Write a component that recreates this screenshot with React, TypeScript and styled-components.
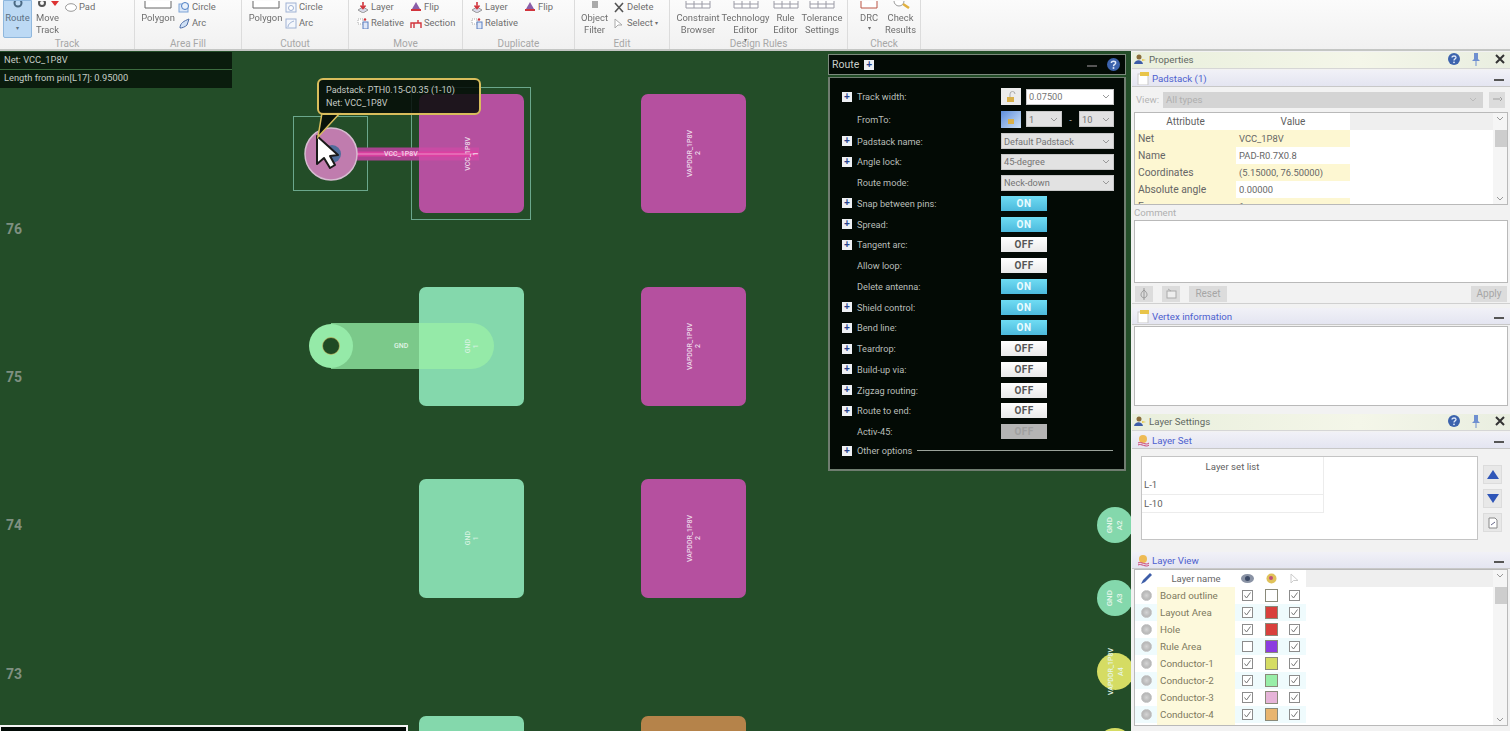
import React from "react";
import styled, { createGlobalStyle } from "styled-components";

const Global = createGlobalStyle`
  html, body { margin: 0; padding: 0; height: 100%; overflow: hidden; background: #f3f3f3; }
  #root { height: 100%; }
`;
const UI = `Roboto, "Open Sans", "Liberation Sans", sans-serif`;

const Page = styled.div`
  width: 1510px; height: 731px; overflow: hidden; display: flex; flex-direction: column;
  font-family: ${UI}; filter: blur(0.35px);
`;
/* ribbon */
const Ribbon = styled.header`
  height: 51px; flex: none; display: flex; box-sizing: border-box; overflow: hidden;
  background: linear-gradient(#fbfbfb, #f1f1f1); border-bottom: 2px solid #c4c6c4;
  color: #6e6e6e; font-size: 9.4px; line-height: 12px;
`;
const Group = styled.section<{ $w: number }>`
  width: ${p => p.$w}px; flex: none; box-sizing: border-box; border-right: 1px solid #dcdcdc;
  display: flex; flex-direction: column;
`;
const GroupBody = styled.div<{ $gap?: number; $pad?: number }>`
  height: 38px; width: 100%; box-sizing: border-box; display: flex; padding-top: 1px;
  gap: ${p => p.$gap ?? 0}px; padding-left: ${p => p.$pad ?? 0}px;
`;
const GroupName = styled.div`
  height: 11px; font-size: 10px; line-height: 11px; color: #a7a7a7; text-align: center;
`;
const Big = styled.div<{ $active?: boolean; $w?: number; $ml?: number }>`
  width: ${p => (p.$w ? p.$w + "px" : "auto")}; margin-left: ${p => p.$ml ?? 0}px; flex: none; height: 37px; box-sizing: border-box;
  display: flex; flex-direction: column; align-items: center; text-align: center; white-space: nowrap;
  position: relative; padding-top: 11px;
  ${p => p.$active && `background: #bcd9f4; border: 1px solid #8fb7dd; border-radius: 0 0 2px 2px; color: #5d7184; margin-top: -1px; height: 38px; padding-top: 11px;`}
`;
const TopIcon = styled.svg`
  position: absolute; top: 0; left: 50%; transform: translateX(-50%);
`;
const Col = styled.div<{ $w?: number; $ml?: number }>`
  width: ${p => (p.$w ? p.$w + "px" : "auto")}; margin-left: ${p => p.$ml ?? 0}px; flex: none; display: flex; flex-direction: column; gap: 4px;
`;
const Small = styled.div`
  height: 12px; display: flex; align-items: center; gap: 2px; white-space: nowrap;
`;
const Caret = styled.span`font-size: 6px; line-height: 8px;`;
/* workspace */
const Main = styled.main`
  flex: 1; display: flex; min-height: 0;
`;
const Canvas = styled.div`
  width: 1131px; flex: none; position: relative; overflow: hidden; background: #234d28;
`;
const InfoBox = styled.div`
  position: absolute; left: 0; top: 1px; width: 232px; height: 36px; background: #0a1c0d; color: #c6cdc6;
  font-size: 9.3px; line-height: 16px;
`;
const InfoRow = styled.div<{ $line?: boolean }>`
  height: 17px; padding-left: 4px; ${p => p.$line && `border-bottom: 1px solid #3c6b3f;`}
`;
const Axis = styled.div<{ $y: number }>`
  position: absolute; left: 6px; top: ${p => p.$y}px; color: #7f9081; font: bold 14px/16px ${UI};
`;
const Pad = styled.div<{ $x: number; $y: number; $c: string; $h?: number }>`
  position: absolute; left: ${p => p.$x}px; top: ${p => p.$y}px; width: 105px; height: ${p => p.$h ?? 119}px;
  border-radius: 7px; background: ${p => p.$c}; display: flex; align-items: center; justify-content: center;
`;
const PadLabel = styled.div`
  position: relative; z-index: 2;
  writing-mode: vertical-rl; transform: rotate(180deg); color: #ecd8e8; font-size: 7px; line-height: 8px; text-align: center; font-weight: 500; white-space: nowrap;
`;
const GreenLabel = styled(PadLabel)`color: #d6f3e0;`;
const ViaLabel = styled(PadLabel)<{ $size?: number }>`color: #e6f6ea; font-size: ${p => p.$size ?? 8}px; line-height: 10px;`;
const Outline = styled.div<{ $x: number; $y: number; $w: number; $h: number }>`
  position: absolute; left: ${p => p.$x}px; top: ${p => p.$y}px; width: ${p => p.$w}px; height: ${p => p.$h}px;
  border: 1px solid #6ba78c; box-sizing: border-box;
`;
const Drawing = styled.svg`
  position: absolute; left: 0; top: 0; width: 1131px; height: 681px; overflow: visible; pointer-events: none;
`;
const Tip = styled.div`
  position: absolute; z-index: 3; left: 317px; top: 27px; width: 164px; height: 37px; box-sizing: border-box;
  background: rgba(5, 12, 8, 0.86); border: 2px solid #d8bd5c; border-radius: 6px; color: #c5cbc5;
  font-size: 9px; line-height: 13px; padding: 4px 0 0 7px; white-space: nowrap;
`;
const Strip = styled.div`
  position: absolute; left: 0; top: 674px; width: 408px; height: 8px; background: #020a06; border: 2px solid #f4f4f4; border-left-width: 1px; box-sizing: border-box;
`;
const Tiny = styled.div<{ $x: number; $y: number; $c: string }>`
  position: absolute; z-index: 2; left: ${p => p.$x}px; top: ${p => p.$y}px; color: ${p => p.$c}; font-size: 7px; line-height: 8px; font-weight: 500; white-space: nowrap;
`;
const Via = styled.div<{ $y: number; $c: string; $s?: number }>`
  position: absolute; left: 1097px; top: ${p => p.$y}px; width: ${p => p.$s ?? 36}px; height: ${p => p.$s ?? 36}px; border-radius: 50%; background: ${p => p.$c};
  display: flex; align-items: center; justify-content: center;
`;
/* route panel */
const RoutePanel = styled.div`
  position: absolute; z-index: 5; left: 828px; top: 3px; width: 298px; height: 417px; display: flex; flex-direction: column; gap: 2px;
  color: #b9beb9; font-size: 9.2px;
`;
const RouteHead = styled.div`
  height: 21px; flex: none; box-sizing: border-box; background: #030a05; border: 1px solid #7c8a7d; display: flex; align-items: center; padding: 0 5px 0 3px; color: #c9cec9; font-size: 10.5px; gap: 5px;
`;
const Spacer = styled.div`flex: 1;`;
const RouteBody = styled.div`
  flex: 1; box-sizing: border-box; background: #030a05; border: 2px solid #6f7d70; border-top-width: 1px; padding: 8px 11px 0 12px;
  display: flex; flex-direction: column;
`;
const Row = styled.div<{ $h?: number }>`
  height: ${p => p.$h ?? 20.75}px; flex: none; display: flex; align-items: center;
`;
const PlusSlot = styled.div`width: 15px; flex: none; display: flex;`;
const Plus = styled.span`
  width: 10px; height: 10px; background: #eef0f4; display: inline-flex; align-items: center; justify-content: center; color: #24408c;
  font: bold 10px/10px "Liberation Sans", sans-serif; flex: none;
`;
const RowLabel = styled.div`width: 144px; flex: none; white-space: nowrap;`;
const Select = styled.div<{ $w: number; $white?: boolean }>`
  width: ${p => p.$w}px; height: 16px; box-sizing: border-box; flex: none; background: ${p => (p.$white ? "#fff" : "#e2e2e2")}; color: #747474;
  border: 1px solid #c8c8c8; display: flex; align-items: center; justify-content: space-between; padding: 0 3px 0 2px; font-size: 9.2px;
`;
const Chevron = styled.svg`width: 8px; height: 5px; flex: none;`;
const Toggle = styled.div<{ $state: "on" | "off" | "dis" }>`
  width: 46px; height: 15px; box-sizing: border-box; font: bold 10px/15px ${UI}; text-align: center; letter-spacing: .4px;
  background: ${p => (p.$state === "on" ? "linear-gradient(#6fdcf3, #4cb9dc)" : p.$state === "off" ? "linear-gradient(#fff, #e9e9e9)" : "#b4b4b4")};
  color: ${p => (p.$state === "on" ? "#e8fbff" : p.$state === "off" ? "#555" : "#a0a0a0")};
`;
const Lock = styled.div<{ $blue?: boolean }>`
  width: 20px; height: 17px; flex: none; margin-right: 5px; background: ${p => (p.$blue ? "linear-gradient(135deg,#5d8edc,#cfe2f7)" : "#ececec")};
  display: flex; align-items: center; justify-content: center;
`;
const Dash = styled.span`width: 17px; text-align: center; flex: none;`;
const Rule = styled.div`flex: 1; height: 1px; background: #9aa29a; margin-left: 5px;`;
/* side */
const Side = styled.aside`
  flex: 1; background: #f2f2f2; display: flex; flex-direction: column; min-width: 0; color: #5f5f5f; font-size: 9.6px; padding: 1px 0 0 1px; box-sizing: border-box;
`;
const DockHead = styled.div`
  height: 17px; flex: none; box-sizing: border-box; display: flex; align-items: center; background: linear-gradient(90deg,#e9efdc,#f4f6e9 60%,#e9eee0); color: #626862; padding: 0 5px 2px 2px; font-size: 9.7px; gap: 3px; border-bottom: 1px solid #d6d6d6;
`;
const SecHead = styled.div`
  height: 17px; flex: none; box-sizing: border-box; display: flex; align-items: center; background: linear-gradient(#f1f1f7,#e4e5f1); color: #4d60cf; padding: 0 4px 0 5px; font-size: 9.7px; gap: 2px; border-bottom: 1px solid #c8c8c8; margin-top: 1px;
`;
const Minus = styled.span`width: 10px; height: 2px; background: #555; margin: 4px 2px 0 0;`;
const PanelMinus = styled(Minus)`margin: 2px 5px 0 0;`;
const ViewBar = styled.div`
  height: 25px; flex: none; display: flex; align-items: center; gap: 4px; padding: 0 5px 0 4px; color: #b5b5b5;
`;
const ViewSelect = styled.div`
  flex: 1; height: 16px; background: #d4d4d4; color: #afafaf; padding-left: 3px; line-height: 16px; display: flex; justify-content: space-between; align-items: center; padding-right: 6px; margin-right: 2px;
`;
const GreyBtn = styled.div<{ $w: number }>`
  width: ${p => p.$w}px; height: 16px; flex: none; background: #dcdcdc; color: #a6a6a6; text-align: center; line-height: 16px; font-size: 10px; display: flex; align-items: center; justify-content: center;
`;
const Frame = styled.div<{ $h: number }>`
  height: ${p => p.$h}px; flex: none; margin: 0 2px 0 2px; box-sizing: border-box; border: 1px solid #b9b9b9; background: #fff; position: relative; overflow: hidden;
`;
const ScrollBar = styled.div`
  position: absolute; right: 0; top: 0; bottom: 0; width: 14px; background: #f5f5f5; display: flex; flex-direction: column; align-items: center; justify-content: space-between; padding: 3px 0; box-sizing: border-box;
`;
const Thumb = styled.div`
  position: absolute; right: 0; width: 12px; top: 17px; height: 17px; background: #cdcdcd;
`;
const PropTable = styled.div`
  display: grid; grid-template-columns: 101px 114px; grid-auto-rows: 17.1px; width: 215px;
`;
const HeadCell = styled.div`
  text-align: center; line-height: 17px; background: #fff; font-size: 10px;
`;
const HeadFill = styled.div<{ $l: number }>`
  position: absolute; left: ${p => p.$l}px; right: 14px; top: 0; height: 17px; background: #efefef;
`;
const Cell = styled.div<{ $y?: boolean; $key?: boolean }>`
  background: ${p => (p.$y ? "#fdf7d2" : "#fff")}; padding-left: 3px; line-height: 17px; white-space: nowrap; color: #666;
  font-size: ${p => (p.$key ? 10.3 : 9.4)}px;
`;
const LabelLine = styled.div`
  height: 15px; flex: none; padding-left: 2px; color: #b0b0b0; line-height: 15px;
`;
const ButtonBar = styled.div`
  height: 20px; flex: none; display: flex; align-items: center; gap: 9px; padding: 0 3px; margin-top: 1px; border-bottom: 1px solid #d0d0d0; box-sizing: border-box;
`;
const Gap = styled.div<{ $h: number }>`height: ${p => p.$h}px; flex: none;`;
const SetArea = styled.div`
  height: 102px; flex: none; display: flex; padding: 7px 7px 0 9px; gap: 5px; box-sizing: border-box;
`;
const SetList = styled.div`
  width: 337px; height: 84px; box-sizing: border-box; border: 1px solid #c4c4c4; background: #fff;
`;
const SetTable = styled.div`
  width: 181px; border-right: 1px solid #ececec;
`;
const SetHead = styled.div`height: 19px; text-align: center; line-height: 19px;`;
const SetRow = styled.div`height: 18.5px; line-height: 18px; padding-left: 2px; border-bottom: 1px solid #ececec; box-sizing: border-box;`;
const SetBtns = styled.div`display: flex; flex-direction: column; gap: 5px; padding-top: 9px;`;
const SetBtn = styled.div`width: 19px; height: 19px; background: #e8e8e8; border: 1px solid #dcdcdc; box-sizing: border-box; display: flex; align-items: center; justify-content: center;`;
const LayerTable = styled.div`
  display: grid; grid-template-columns: 22px 78px 25px 23px 23px; grid-auto-rows: 17px; width: 171px; color: #7d7a60; font-size: 9.8px;
`;
const LC = styled.div<{ $alt?: boolean; $y?: boolean; $head?: boolean }>`
  display: flex; align-items: center; justify-content: center; overflow: hidden; white-space: nowrap;
  background: ${p => (p.$y ? "#fdf9dc" : p.$alt ? "#effbfd" : "#fff")};
  ${p => p.$y && `justify-content: flex-start; padding-left: 3px;`}
  ${p => p.$head && `color: #666; justify-content: center; padding: 0; font-size: 9.5px;`}
`;
const Radio = styled.span`width: 11px; height: 11px; border-radius: 50%; background: radial-gradient(#d4d4d4, #a8a8a8); border: 1px solid #c4c4c4; box-sizing: border-box;`;
const Check = styled.span`width: 11px; height: 11px; box-sizing: border-box; border: 1px solid #8c8c8c; background: #fff; display: flex; align-items: center; justify-content: center;`;
const Swatch = styled.span<{ $c: string }>`width: 13px; height: 13px; box-sizing: border-box; border: 1px solid #8a8a7a; background: ${p => p.$c};`;
const PinIcon = styled.svg`margin-left: 9px;`;
const CloseIcon = styled.svg`margin-left: 12px;`;

const Chev = ({ c = "#999" }: { c?: string }) => (
  <Chevron viewBox="0 0 8 5"><path d="M1 1 L4 4 L7 1" fill="none" stroke={c} /></Chevron>
);
const PlusBox = () => <Plus>+</Plus>;
const Tick = () => (
  <svg width="9" height="9" viewBox="0 0 9 9"><path d="M1.5 4.5 L3.5 7 L7.5 1.5" fill="none" stroke="#777" /></svg>
);
const Help = ({ s = 12 }: { s?: number }) => (
  <svg width={s} height={s} viewBox="0 0 12 12"><circle cx="6" cy="6" r="6" fill="#3c63ad" /><path d="M4 4.5 C4 2.5 8 2.5 8 4.5 C8 6 6 5.8 6 7.5" fill="none" stroke="#dfe8fa" strokeWidth="1.3" /><circle cx="6" cy="9.3" r=".9" fill="#dfe8fa" /></svg>
);
const DockIcon = () => (
  <svg width="12" height="11" viewBox="0 0 12 11"><circle cx="5" cy="3" r="2.5" fill="#8a6d3b" /><path d="M0 10 C1 5 8 5 9 10Z" fill="#3d5da8" /><path d="M8 5 L12 6 L8 7Z" fill="#e8c84a" /></svg>
);
const PinClose = () => (
  <>
    <Help />
    <PinIcon width="8" height="13" viewBox="0 0 8 13"><path d="M2 0 H6 V6 L8 8 H0 L2 6Z" fill="#6f8fd0" /><path d="M4 8 V13" stroke="#6f8fd0" /></PinIcon>
    <CloseIcon width="10" height="10" viewBox="0 0 10 10"><path d="M1 1 L9 9 M9 1 L1 9" stroke="#333" strokeWidth="2" /></CloseIcon>
  </>
);
const SecIcon = ({ gear }: { gear?: boolean }) => (
  <svg width="13" height="13" viewBox="0 0 13 13">
    {gear ? (
      <><circle cx="6" cy="5" r="4" fill="#eebb55" /><path d="M1 9 C4 7 9 12 12 9 M1 11 C4 9 9 14 12 11" stroke="#cc4477" fill="none" /></>
    ) : (
      <><rect x="1" y="2" width="10" height="11" fill="#fff" stroke="#c9c9c9" /><rect x="3" y="0" width="9" height="4" fill="#e8c44a" /></>
    )}
  </svg>
);
const R = ({ children }: { children: React.ReactNode }) => (
  <svg width="12" height="11" viewBox="0 0 12 11">{children}</svg>
);
const CircleFill = () => <R><rect x="1" y="2" width="9" height="8" fill="#dce8f8" stroke="#7da3d6" /><circle cx="7" cy="4" r="3.5" fill="#e9f1fb" stroke="#4f7fc4" /></R>;
const ArcFill = () => <R><path d="M2 10 C2 5 6 3 11 1 L9 7 C7 9 4 10 2 10Z" fill="#cfe0f5" stroke="#4f6fa8" /></R>;
const CircleCut = () => <R><rect x="1" y="1" width="10" height="9" fill="#f4f7fc" stroke="#9fb2d4" /><circle cx="6" cy="6" r="2.5" fill="#fff" stroke="#9fb2d4" /></R>;
const ArcCut = () => <R><rect x="1" y="1" width="10" height="9" fill="#f4f7fc" stroke="#9fb2d4" /><path d="M3 9 C3 6 6 4 9 3" fill="none" stroke="#9fb2d4" /></R>;
const LayerIcon = () => <R><path d="M1 8 L6 5 L11 8 L6 11Z" fill="#d8d8e8" stroke="#999" /><path d="M6 0 V6 M3.5 3.5 L6 6.5 L8.5 3.5" fill="none" stroke="#d1343c" strokeWidth="1.6" /></R>;
const RelativeIcon = () => <R><rect x="1" y="1" width="5" height="5" fill="#fff" stroke="#aaa" strokeDasharray="1 1" /><rect x="6" y="4" width="5" height="7" fill="#dfe7f7" stroke="#5a7fc0" /><circle cx="8" cy="1.5" r="1.2" fill="#d1343c" /></R>;
const FlipIcon = () => <R><path d="M6 0 L10 7 H2Z" fill="#8a5ea8" /><path d="M1 8 H11" stroke="#d1343c" strokeWidth="2" /></R>;
const SectionIcon = () => <R><path d="M1 10 V5 H11 V10 M4 5 V10 M8 5 V2" fill="none" stroke="#d1343c" strokeWidth="1.4" /></R>;
const DeleteIcon = () => <R><path d="M2 1 L10 10 M10 1 L2 10" stroke="#555" strokeWidth="1.6" /></R>;
const SelectIcon = () => <R><path d="M2 1 V10 L5 7 L9 7Z" fill="#fff" stroke="#aaa" /></R>;

type RouteRow = { l: string; plus?: boolean; t?: "on" | "off" | "dis"; s?: string };
const routeRows: RouteRow[] = [
  { l: "Padstack name:", plus: true, s: "Default Padstack" },
  { l: "Angle lock:", plus: true, s: "45-degree" },
  { l: "Route mode:", s: "Neck-down" },
  { l: "Snap between pins:", plus: true, t: "on" },
  { l: "Spread:", plus: true, t: "on" },
  { l: "Tangent arc:", plus: true, t: "off" },
  { l: "Allow loop:", t: "off" },
  { l: "Delete antenna:", t: "on" },
  { l: "Shield control:", plus: true, t: "on" },
  { l: "Bend line:", plus: true, t: "on" },
  { l: "Teardrop:", plus: true, t: "off" },
  { l: "Build-up via:", plus: true, t: "off" },
  { l: "Zigzag routing:", plus: true, t: "off" },
  { l: "Route to end:", plus: true, t: "off" },
  { l: "Activ-45:", t: "dis" },
];
const layers: [string, boolean, string][] = [
  ["Board outline", true, "#ffffff"],
  ["Layout Area", true, "#d9403c"],
  ["Hole", true, "#d9403c"],
  ["Rule Area", false, "#8c3be0"],
  ["Conductor-1", true, "#d5dc63"],
  ["Conductor-2", true, "#98eea8"],
  ["Conductor-3", true, "#e6b4d8"],
  ["Conductor-4", true, "#e8b56f"],
  ["Conductor-5", true, "#98d8a8"],
];
const rules: [string, React.ReactNode, number, number][] = [
  ["Constraint", "Browser", 42, 0],
  ["Technology", <>Editor <Caret>▾</Caret></>, 47, 3],
  ["Rule", "Editor", 19, 7],
  ["Tolerance", "Settings", 40, 7],
];
const MAG = "#b5509f";
const GRN = "#84d8ac";

export default function App() {
  return (
    <Page>
      <Global />
      <Ribbon>
        <Group $w={135}>
          <GroupBody $pad={3}>
            <Big $active $w={29}>
              <TopIcon width="12" height="8" viewBox="0 0 12 8"><circle cx="6" cy="2" r="3.5" fill="none" stroke="#4b6a84" strokeWidth="2" /></TopIcon>
              Route<Caret>▾</Caret>
            </Big>
            <Big $w={25} $ml={3}>
              <TopIcon width="26" height="8" viewBox="0 0 26 8"><circle cx="7" cy="2" r="3" fill="none" stroke="#555" strokeWidth="2" /><path d="M16 0 H24 L20 5Z" fill="#d33" /></TopIcon>
              Move<br />Track
            </Big>
            <Col $ml={5}>
              <Small><svg width="12" height="9" viewBox="0 0 12 9"><ellipse cx="6" cy="4.5" rx="5.5" ry="3.8" fill="#fff" stroke="#999" /></svg>Pad</Small>
            </Col>
          </GroupBody>
          <GroupName>Track</GroupName>
        </Group>
        <Group $w={107}>
          <GroupBody $pad={6} $gap={3}>
            <Big $w={34}>
              <TopIcon width="28" height="8" viewBox="0 0 28 8"><path d="M1 0 V7 H27 V0" fill="#fff" stroke="#666" /></TopIcon>
              Polygon
            </Big>
            <Col><Small><CircleFill />Circle</Small><Small><ArcFill />Arc</Small></Col>
          </GroupBody>
          <GroupName>Area Fill</GroupName>
        </Group>
        <Group $w={107}>
          <GroupBody $pad={7} $gap={3}>
            <Big $w={33}>
              <TopIcon width="28" height="8" viewBox="0 0 28 8"><path d="M1 0 V7 H27 V0" fill="#fff" stroke="#666" /></TopIcon>
              Polygon
            </Big>
            <Col><Small><CircleCut />Circle</Small><Small><ArcCut />Arc</Small></Col>
          </GroupBody>
          <GroupName>Cutout</GroupName>
        </Group>
        <Group $w={114}>
          <GroupBody $pad={8}>
            <Col $w={53}><Small><LayerIcon />Layer</Small><Small><RelativeIcon />Relative</Small></Col>
            <Col><Small><FlipIcon />Flip</Small><Small><SectionIcon />Section</Small></Col>
          </GroupBody>
          <GroupName>Move</GroupName>
        </Group>
        <Group $w={112}>
          <GroupBody $pad={8}>
            <Col $w={53}><Small><LayerIcon />Layer</Small><Small><RelativeIcon />Relative</Small></Col>
            <Col><Small><FlipIcon />Flip</Small></Col>
          </GroupBody>
          <GroupName>Duplicate</GroupName>
        </Group>
        <Group $w={95}>
          <GroupBody $pad={6} $gap={5}>
            <Big $w={27}>
              <TopIcon width="8" height="7" viewBox="0 0 8 7"><rect x="1" y="0" width="6" height="7" fill="#aaa" /></TopIcon>
              Object<br />Filter
            </Big>
            <Col><Small><DeleteIcon />Delete</Small><Small><SelectIcon />Select<Caret>▾</Caret></Small></Col>
          </GroupBody>
          <GroupName>Edit</GroupName>
        </Group>
        <Group $w={178}>
          <GroupBody $pad={7}>
            {rules.map(([a, b, w, ml]) => (
              <Big key={a} $w={w} $ml={ml}>
                <TopIcon width="26" height="8" viewBox="0 0 26 8"><path d="M1 0 V7 H25 V0 M1 3 H25 M9 0 V7 M17 0 V7" fill="#fff" stroke="#9a9aa5" /></TopIcon>
                {a}<br />{b}
              </Big>
            ))}
          </GroupBody>
          <GroupName>Design Rules</GroupName>
        </Group>
        <Group $w={73}>
          <GroupBody $pad={12} $gap={8}>
            <Big $w={18}>
              <TopIcon width="18" height="8" viewBox="0 0 18 8"><path d="M1 0 V7 H17 V0" fill="#fff" stroke="#b54" /></TopIcon>
              DRC<Caret>▾</Caret>
            </Big>
            <Big $w={29}>
              <TopIcon width="20" height="8" viewBox="0 0 20 8"><circle cx="8" cy="0" r="5" fill="#fff" stroke="#999" /><path d="M12 3 L18 7" stroke="#e0b040" strokeWidth="2.5" /></TopIcon>
              Check<br />Results
            </Big>
          </GroupBody>
          <GroupName>Check</GroupName>
        </Group>
      </Ribbon>
      <Main>
        <Canvas>
          <Axis $y={170}>76</Axis>
          <Axis $y={318}>75</Axis>
          <Axis $y={466}>74</Axis>
          <Axis $y={615}>73</Axis>
          <Pad $x={419} $y={43} $c={MAG}><PadLabel>VCC_1P8V<br />1</PadLabel></Pad>
          <Pad $x={641} $y={43} $c={MAG}><PadLabel>VAPDDR_1P8V<br />2</PadLabel></Pad>
          <Pad $x={419} $y={236} $c={GRN}><GreenLabel>GND<br />1</GreenLabel></Pad>
          <Pad $x={641} $y={236} $c={MAG}><PadLabel>VAPDDR_1P8V<br />2</PadLabel></Pad>
          <Pad $x={419} $y={428} $c={GRN}><GreenLabel>GND<br />1</GreenLabel></Pad>
          <Pad $x={641} $y={428} $c={MAG}><PadLabel>VAPDDR_1P8V<br />2</PadLabel></Pad>
          <Pad $x={419} $y={665} $c={GRN} />
          <Pad $x={641} $y={665} $c="#b5834a" />
          <Outline $x={293} $y={65} $w={75} $h={75} />
          <Outline $x={411} $y={36} $w={120} $h={133} />
          <Drawing viewBox="0 0 1131 681">
            <path d="M331 103 H419" stroke="#a8438f" strokeWidth="13" />
            <path d="M419 103 H479" stroke="#c94ba4" strokeWidth="13" />
            <path d="M331 103 H478" stroke="#e23fa2" strokeWidth="5" opacity=".85" />
            <path d="M340 103 H478" stroke="#f3b4d8" strokeWidth=".7" />
            <circle cx="331" cy="103" r="26" fill="#c07cae" stroke="#d6bcd0" strokeWidth="1.5" />
            <circle cx="332" cy="103" r="9" fill="#4f6d9b" />
            <path d="M331 272 H419 V318 H331Z" fill="#7bc98a" />
            <path d="M419 272 H471 A23 23 0 0 1 471 318 H419Z" fill="#95eaa8" />
            <circle cx="331" cy="295" r="22" fill="#95eaa8" />
            <circle cx="331" cy="295" r="8.5" fill="#1f4a24" stroke="#d8c060" strokeWidth=".6" />
            <path d="M317 85 L317 113 L324 107 L330 117 L335 114 L330 105 L338 104Z" fill="#fff" stroke="#1a1a1a" strokeWidth="2" strokeLinejoin="round" />
            <path d="M322 62 H340 L318 86Z" fill="#07120a" stroke="#d8bd5c" strokeWidth="1.5" />
          </Drawing>
          <Tip>Padstack: PTH0.15-C0.35 (1-10)<br />Net: VCC_1P8V</Tip>
          <Tiny $x={384} $y={99} $c="#f0d8ea">VCC_1P8V</Tiny>
          <Tiny $x={394} $y={291} $c="#e0f4e6">GND</Tiny>
          <InfoBox><InfoRow $line>Net: VCC_1P8V</InfoRow><InfoRow>Length from pin[L17]: 0.95000</InfoRow></InfoBox>
          <Via $y={456} $c={GRN}><ViaLabel>GND<br />A2</ViaLabel></Via>
          <Via $y={529} $c={GRN}><ViaLabel>GND<br />A3</ViaLabel></Via>
          <Via $y={602} $s={37} $c="#d5dc63"><ViaLabel $size={7}>VAPDDR_1P8V<br />A4</ViaLabel></Via>
          <Via $y={677} $c="#d5dc63" />
          <Strip />
          <RoutePanel>
            <RouteHead>Route <PlusBox /><Spacer /><PanelMinus /><Help s={13} /></RouteHead>
            <RouteBody>
              <Row $h={21.75}>
                <PlusSlot><PlusBox /></PlusSlot><RowLabel>Track width:</RowLabel>
                <Lock><svg width="12" height="12" viewBox="0 0 12 12"><rect x="2" y="6" width="7" height="5" fill="#d9b04a" /><path d="M5 6 V3 A2.5 2.5 0 0 1 10 3" fill="none" stroke="#aaa" /></svg></Lock>
                <Select $w={88} $white>0.07500<Chev /></Select>
              </Row>
              <Row $h={23}>
                <PlusSlot /><RowLabel>FromTo:</RowLabel>
                <Lock $blue><svg width="10" height="10" viewBox="0 0 10 10"><rect x="2" y="5" width="6" height="5" fill="#d9b04a" /></svg></Lock>
                <Select $w={36}>1<Chev /></Select><Dash>-</Dash><Select $w={35}>10<Chev /></Select>
              </Row>
              {routeRows.map(r => (
                <Row key={r.l}>
                  <PlusSlot>{r.plus && <PlusBox />}</PlusSlot>
                  <RowLabel>{r.l}</RowLabel>
                  {r.t && <Toggle $state={r.t}>{r.t === "on" ? "ON" : "OFF"}</Toggle>}
                  {r.s && <Select $w={113}>{r.s}<Chev /></Select>}
                </Row>
              ))}
              <Row $h={17}><PlusSlot><PlusBox /></PlusSlot>Other options<Rule /></Row>
            </RouteBody>
          </RoutePanel>
        </Canvas>
        <Side>
          <DockHead><DockIcon />Properties<Spacer /><PinClose /></DockHead>
          <SecHead><SecIcon />Padstack (1)<Spacer /><Minus /></SecHead>
          <ViewBar>View:<ViewSelect>All types<Chev c="#bbb" /></ViewSelect>
            <GreyBtn $w={16}><svg width="11" height="7" viewBox="0 0 11 7"><path d="M1 3 H8 M8 1 L10 3 L8 5" fill="none" stroke="#a0a0a0" /></svg></GreyBtn>
          </ViewBar>
          <Frame $h={93}>
            <HeadFill $l={215} />
            <PropTable>
              <HeadCell>Attribute</HeadCell><HeadCell>Value</HeadCell>
              <Cell $y $key>Net</Cell><Cell $y>VCC_1P8V</Cell>
              <Cell $y $key>Name</Cell><Cell>PAD-R0.7X0.8</Cell>
              <Cell $y $key>Coordinates</Cell><Cell $y>(5.15000, 76.50000)</Cell>
              <Cell $y $key>Absolute angle</Cell><Cell>0.00000</Cell>
              <Cell $y $key>From</Cell><Cell $y>1</Cell>
            </PropTable>
            <ScrollBar><Chev /><Chev /></ScrollBar>
            <Thumb />
          </Frame>
          <LabelLine>Comment</LabelLine>
          <Frame $h={63} />
          <ButtonBar>
            <GreyBtn $w={18}><svg width="8" height="12" viewBox="0 0 8 12"><path d="M4 0 V12 M4 2 C0 5 0 9 4 10 C8 9 8 5 4 2Z" fill="none" stroke="#999" /></svg></GreyBtn>
            <GreyBtn $w={18}><svg width="11" height="11" viewBox="0 0 11 11"><rect x="1" y="3" width="9" height="7" fill="#eee" stroke="#aaa" /><path d="M2 1 L5 3" stroke="#aaa" /></svg></GreyBtn>
            <GreyBtn $w={38}>Reset</GreyBtn><Spacer /><GreyBtn $w={36}>Apply</GreyBtn>
          </ButtonBar>
          <Gap $h={3} />
          <SecHead><SecIcon />Vertex information<Spacer /><Minus /></SecHead>
          <Gap $h={1} />
          <Frame $h={80} />
          <Gap $h={8} />
          <DockHead><DockIcon />Layer Settings<Spacer /><PinClose /></DockHead>
          <SecHead><SecIcon gear />Layer Set<Spacer /><Minus /></SecHead>
          <SetArea>
            <SetList>
              <SetTable><SetHead>Layer set list</SetHead><SetRow>L-1</SetRow><SetRow>L-10</SetRow></SetTable>
            </SetList>
            <SetBtns>
              <SetBtn><svg width="12" height="9" viewBox="0 0 12 9"><path d="M6 0 L12 9 H0Z" fill="#2f56b8" /></svg></SetBtn>
              <SetBtn><svg width="12" height="9" viewBox="0 0 12 9"><path d="M0 0 H12 L6 9Z" fill="#2f56b8" /></svg></SetBtn>
              <SetBtn><svg width="10" height="12" viewBox="0 0 10 12"><path d="M1 1 H7 L9 3 V11 H1Z" fill="#fff" stroke="#888" /><path d="M3 8 L7 5" stroke="#668" /></svg></SetBtn>
            </SetBtns>
          </SetArea>
          <SecHead><SecIcon gear />Layer View<Spacer /><Minus /></SecHead>
          <Frame $h={157}>
            <HeadFill $l={171} />
            <LayerTable>
              <LC><svg width="13" height="13" viewBox="0 0 13 13"><path d="M1 12 L3 8 L10 1 L12 3 L5 10Z" fill="#3d5da8" /></svg></LC>
              <LC $head>Layer name</LC>
              <LC><svg width="13" height="9" viewBox="0 0 13 9"><ellipse cx="6.5" cy="4.5" rx="6.5" ry="4.5" fill="#8a93a5" /><circle cx="6.5" cy="4.5" r="2.5" fill="#3c4a66" /></svg></LC>
              <LC><svg width="11" height="11" viewBox="0 0 11 11"><circle cx="5.5" cy="5.5" r="5" fill="#e0c25a" /><circle cx="5" cy="5" r="2" fill="#c0507a" /></svg></LC>
              <LC><svg width="9" height="12" viewBox="0 0 9 12"><path d="M1 1 V10 L3.5 7.5 L8 7.5Z" fill="#fff" stroke="#ccc" /></svg></LC>
              {layers.map(([n, vis, c], i) => {
                const alt = i % 2 === 1;
                return (
                  <React.Fragment key={n}>
                    <LC $alt={alt}><Radio /></LC>
                    <LC $y>{n}</LC>
                    <LC $alt={alt}><Check>{vis && <Tick />}</Check></LC>
                    <LC $alt={alt}><Swatch $c={c} /></LC>
                    <LC $alt={alt}><Check><Tick /></Check></LC>
                  </React.Fragment>
                );
              })}
            </LayerTable>
            <ScrollBar><Chev /><Chev /></ScrollBar>
            <Thumb />
          </Frame>
        </Side>
      </Main>
    </Page>
  );
}
